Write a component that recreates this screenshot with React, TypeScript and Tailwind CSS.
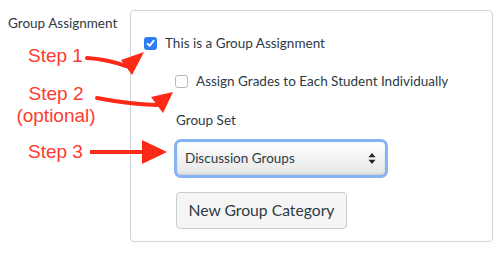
import React from "react";

const Checkbox = ({ checked }: { checked?: boolean }) =>
  checked ? (
    <span className="flex h-[13px] w-[13px] items-center justify-center rounded-[3px] bg-[#2f7ef6]">
      <svg width="9" height="9" viewBox="0 0 9 9">
        <path d="M1.5 4.8 L3.6 6.9 L7.6 1.8" fill="none" stroke="#fff" strokeWidth="1.8" strokeLinecap="round" strokeLinejoin="round" />
      </svg>
    </span>
  ) : (
    <span className="block h-[13px] w-[13px] rounded-[3px] border border-[#b9b9b9] bg-white" />
  );

const Annotations = () => (
  <>
    <svg className="pointer-events-none absolute left-0 top-0" width="500" height="255">
      {/* step 1 */}
      <path d="M87 58 Q106 59 126 66" fill="none" stroke="#fc2a17" strokeWidth="4" strokeLinecap="round" />
      <polygon points="121,60 144,52 132,75" fill="#fc2a17" />
      {/* step 2 */}
      <path d="M97 98 Q128 104 157 105" fill="none" stroke="#fc2a17" strokeWidth="4" strokeLinecap="round" />
      <polygon points="151,97 173,92 163,113" fill="#fc2a17" />
      {/* step 3 */}
      <rect x="90" y="150" width="56" height="4" fill="#fc2a17" />
      <polygon points="142,140 142,164 167,152" fill="#fc2a17" />
    </svg>
    <div className="absolute left-[28px] top-[46px] font-['Liberation_Sans',sans-serif] text-[19px] leading-[19px] text-[#fd3b2f]">
      Step 1
    </div>
    <div className="absolute left-[16px] top-[83px] w-[80px] text-center font-['Liberation_Sans',sans-serif] text-[19px] leading-[22px] text-[#fd3b2f]">
      Step 2
      <br />
      (optional)
    </div>
    <div className="absolute left-[28px] top-[142px] font-['Liberation_Sans',sans-serif] text-[19px] leading-[19px] text-[#fd3b2f]">
      Step 3
    </div>
  </>
);

export default function App() {
  return (
    <div className="relative h-[255px] w-[500px] overflow-hidden bg-white font-['Lato',sans-serif] text-[#2d3b45]">
      <div className="flex pt-[10px]">
        <div className="w-[130px] pl-[8px] pt-[5px] text-[13.5px] leading-[17px]">Group Assignment</div>
        <div className="h-[232px] w-[363px] rounded-[4px] border border-[#cfd3d6] pl-[13px] pt-[26px]">
          <div className="flex h-[13px] items-center gap-[8px]">
            <Checkbox checked />
            <span className="text-[13.5px] leading-[17px]">This is a Group Assignment</span>
          </div>
          <div className="ml-[31px] mt-[25px] flex h-[13px] items-center gap-[8px]">
            <Checkbox />
            <span className="text-[13.5px] leading-[17px]">Assign Grades to Each Student Individually</span>
          </div>
          <div className="ml-[32px] mt-[24px] text-[13.5px] leading-[17px]">Group Set</div>
          <div className="ml-[30px] mt-[10px] flex h-[39px] w-[214px] items-center justify-between rounded-[7px] border-[3px] border-[#86b2f6] bg-gradient-to-b from-white to-[#e6e6e6] pl-[8px] pr-[9px] shadow-[inset_0_-1px_2px_rgba(0,0,0,0.12)]">
            <span className="text-[13.5px] leading-[17px]">Discussion Groups</span>
            <svg width="8" height="11" viewBox="0 0 8 11">
              <polygon points="4,0 7.5,4.2 0.5,4.2" fill="#222" />
              <polygon points="4,11 7.5,6.8 0.5,6.8" fill="#222" />
            </svg>
          </div>
          <button className="ml-[32px] mt-[14px] flex h-[37px] w-[171px] items-center justify-center rounded-[4px] border border-[#c7cdd1] bg-[#f5f5f5] text-[15.7px] leading-[19px] text-[#2d3b45]">
            New Group Category
          </button>
        </div>
      </div>
      <Annotations />
    </div>
  );
}
